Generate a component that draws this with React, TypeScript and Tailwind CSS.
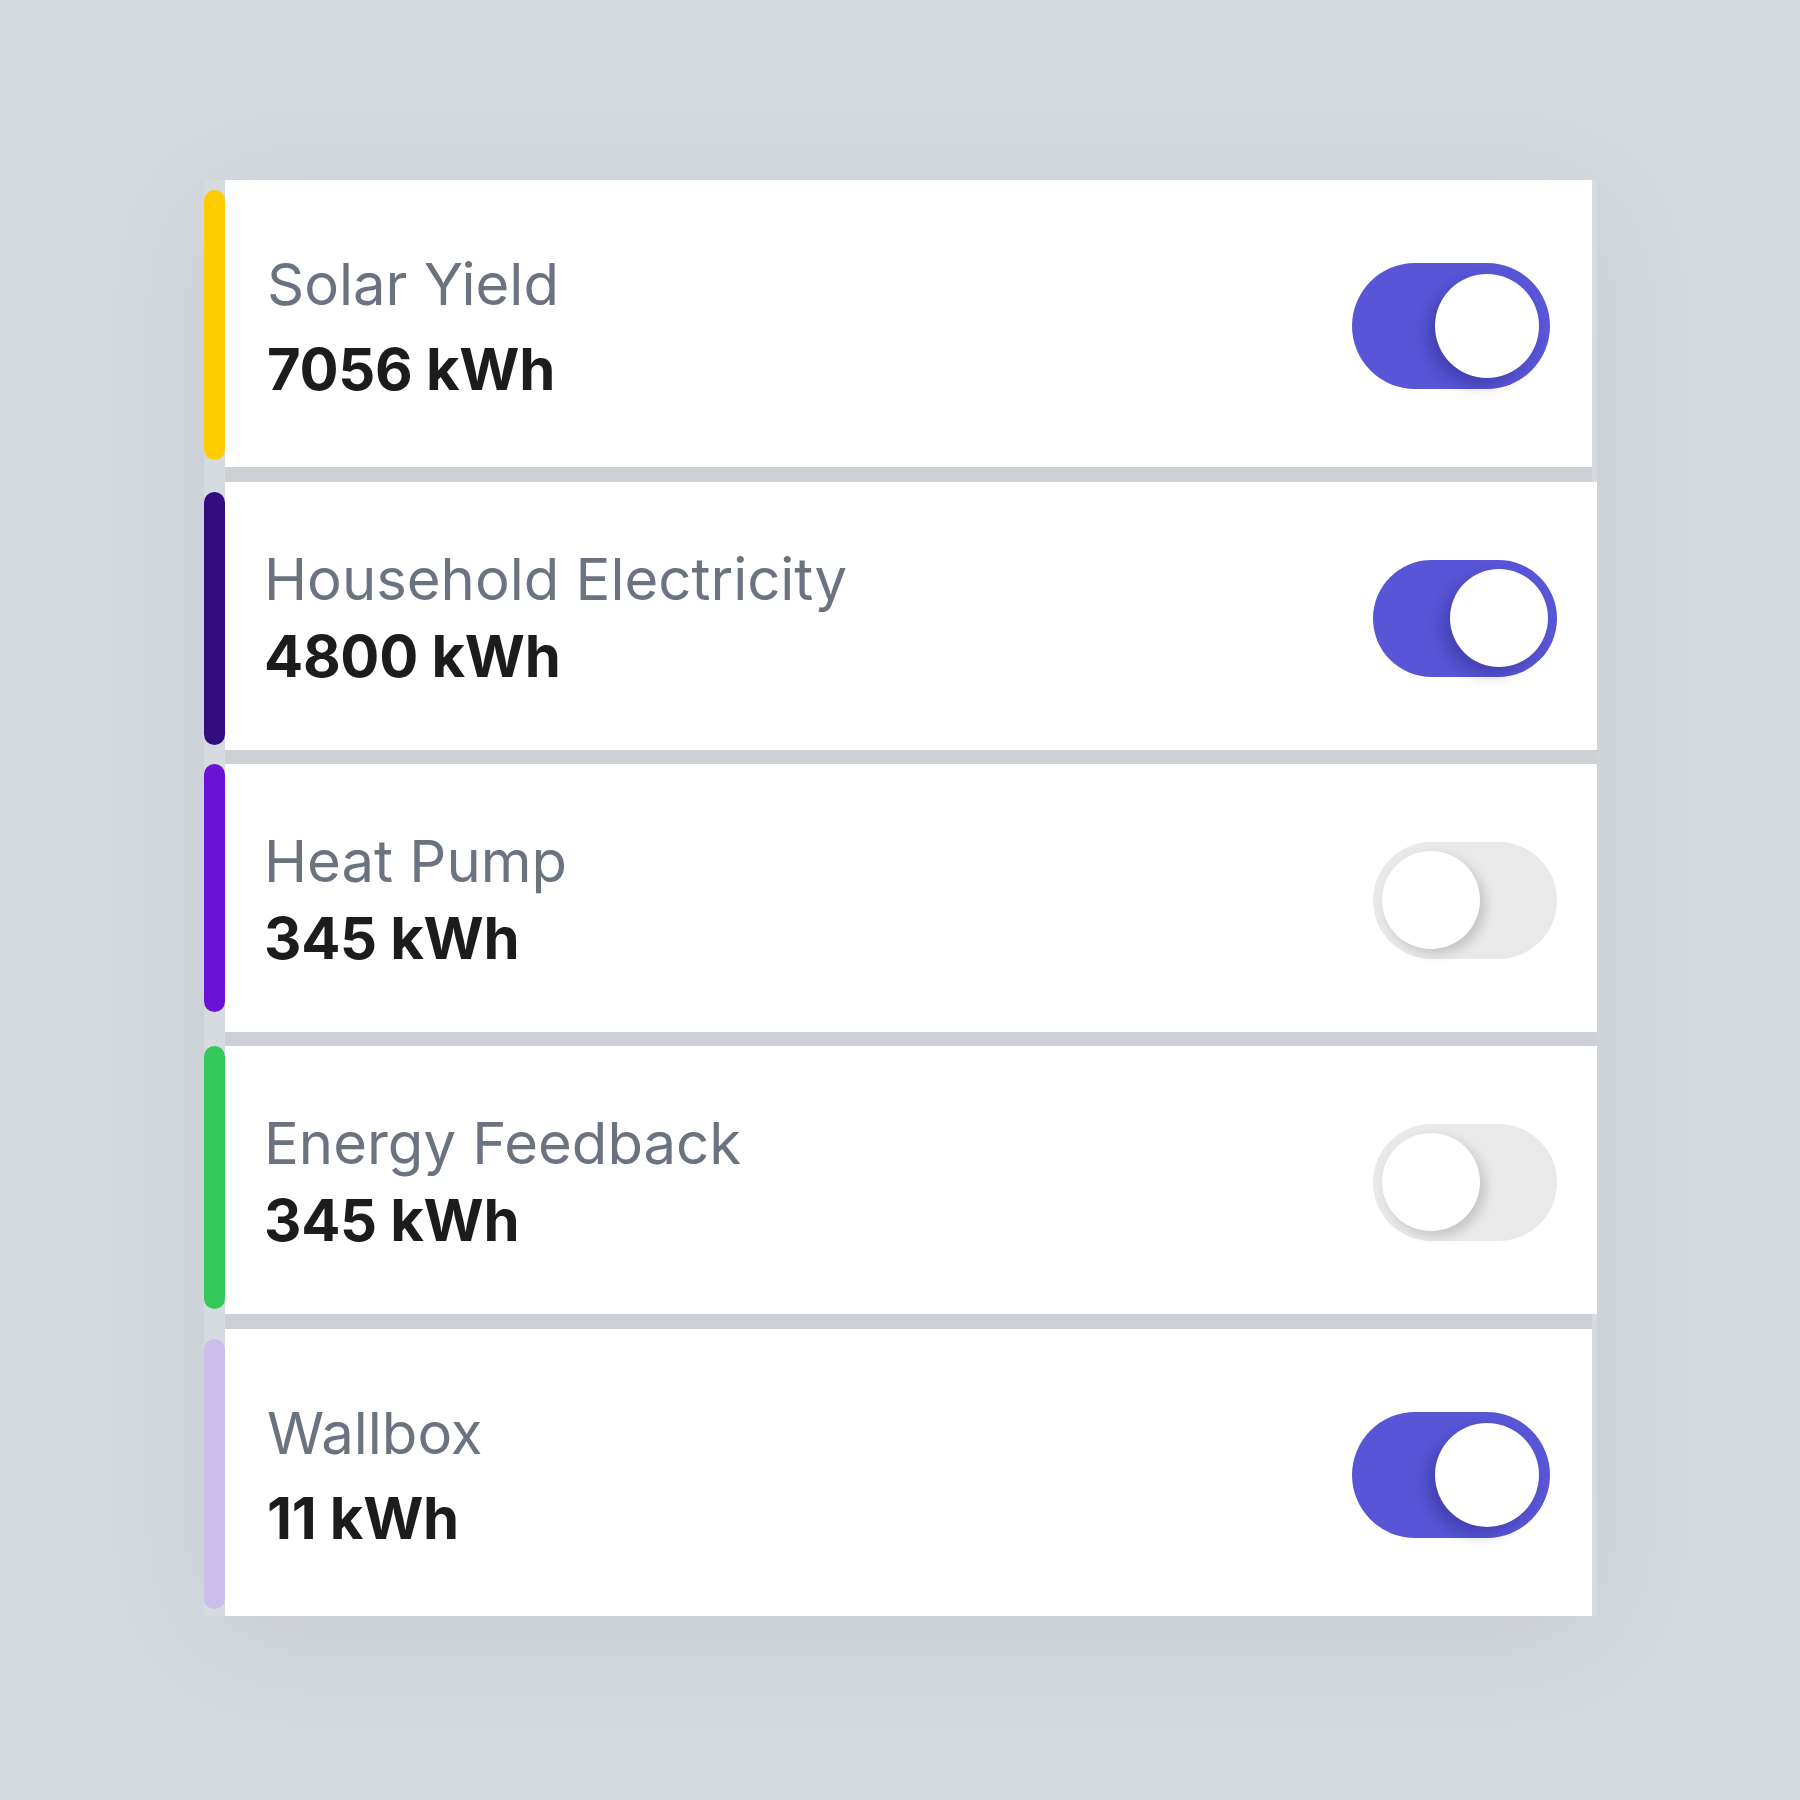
import React from "react";

type Row = {
  label: string;
  value: string;
  bar: string;
  on: boolean;
  big: boolean;
  barTop: string;
  barBottom: string;
};

const rows: Row[] = [
  { label: "Solar Yield", value: "7056 kWh", bar: "bg-[#ffcc00]", on: true, big: true, barTop: "mt-[10px]", barBottom: "mb-[7px]" },
  { label: "Household Electricity", value: "4800 kWh", bar: "bg-[#330c80]", on: true, big: false, barTop: "mt-[10px]", barBottom: "mb-[5px]" },
  { label: "Heat Pump", value: "345 kWh", bar: "bg-[#6a12d6]", on: false, big: false, barTop: "mt-0", barBottom: "mb-[20px]" },
  { label: "Energy Feedback", value: "345 kWh", bar: "bg-[#34c759]", on: false, big: false, barTop: "mt-0", barBottom: "mb-[5px]" },
  { label: "Wallbox", value: "11 kWh", bar: "bg-[#cbbdec]", on: true, big: true, barTop: "mt-[10px]", barBottom: "mb-[7px]" },
];

function Toggle({ on, big }: { on: boolean; big: boolean }) {
  const track = big ? "w-[198px] h-[126px] p-[11px]" : "w-[184px] h-[117px] p-[9px]";
  const knob = big ? "w-[104px] h-[104px]" : "w-[98px] h-[98px]";
  return (
    <div
      className={`mt-[5px] flex shrink-0 rounded-full ${track} ${
        on ? "justify-end bg-[#5856d6]" : "justify-start bg-[#e9e9ea]"
      }`}
    >
      <div
        className={`rounded-full bg-white ${knob} ${
          on
            ? "shadow-[-8px_8px_14px_rgba(20,10,90,0.28)]"
            : "shadow-[5px_5px_12px_rgba(0,0,0,0.16)]"
        }`}
      />
    </div>
  );
}

function EnergyRow({ row }: { row: Row }) {
  return (
    <div className="flex">
      <div className={`w-[21px] shrink-0 rounded-full ${row.bar} ${row.barTop} ${row.barBottom}`} />
      <div
        className={`flex items-center justify-between bg-white ${
          row.big ? "h-[287px] w-[1367px] pl-[42px] pr-[42px]" : "h-[268px] w-[1372px] pl-[39px] pr-[40px]"
        }`}
      >
        <div className={`flex flex-col ${row.big ? "mt-[6px] leading-[85px]" : "mt-[3px] leading-[77px]"}`}>
          <span className="text-[58px] font-normal text-[#6b7280]">{row.label}</span>
          <span className="text-[58px] font-bold tracking-[-0.3px] text-[#1c1c1e]">{row.value}</span>
        </div>
        <Toggle on={row.on} big={row.big} />
      </div>
    </div>
  );
}

export default function App() {
  return (
    <div
      className="h-[1800px] w-[1800px] bg-[#d6dbe0] pl-[204px] pt-[180px]"
      style={{ fontFamily: "Inter, 'Noto Sans', sans-serif" }}
    >
      <div className="flex w-fit flex-col shadow-[0_20px_120px_rgba(60,70,90,0.10)]">
        {rows.map((row, i) => (
          <React.Fragment key={row.label}>
            {i > 0 && (
              <div
                className={`ml-[21px] bg-[#cdd1d6] ${i === 1 || i === 4 ? "h-[15px]" : "h-[14px]"} ${
                  i === 1 || i === 4 ? "w-[1367px]" : "w-[1372px]"
                }`}
              />
            )}
            <EnergyRow row={row} />
          </React.Fragment>
        ))}
      </div>
    </div>
  );
}
